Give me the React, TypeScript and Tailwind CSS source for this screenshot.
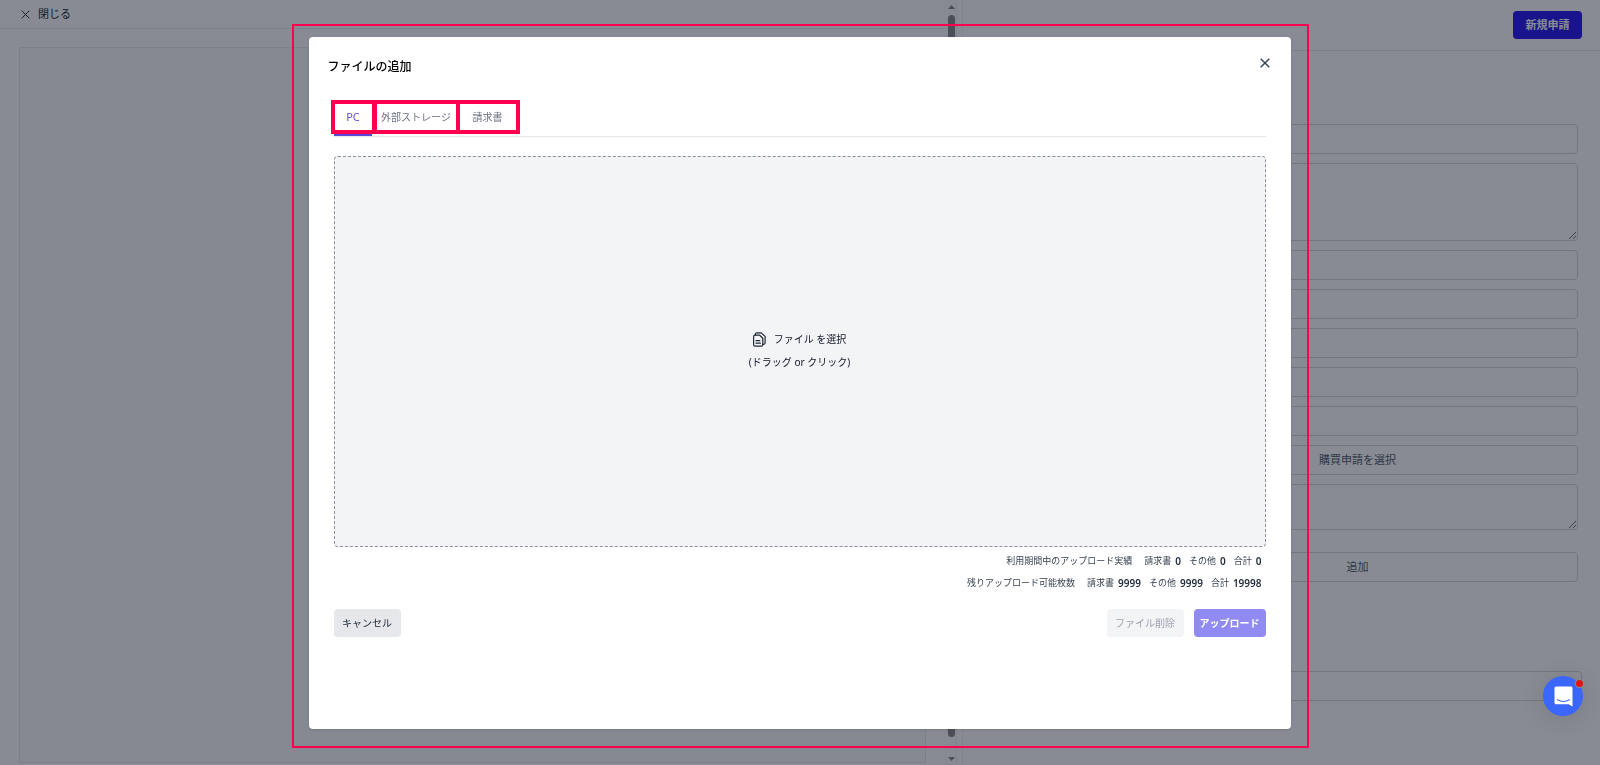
import React from "react";

const fieldClass =
  "block w-full rounded-sm border border-[#d1d5db] bg-white px-3 text-[11px] text-[#4b5563]";

function CloseIcon({ className }: { className: string }) {
  return (
    <svg className={className} viewBox="0 0 10 10" fill="none" stroke="currentColor" aria-hidden="true">
      <path d="M0.7 0.7l8.6 8.6M9.3 0.7L0.7 9.3" />
    </svg>
  );
}

function DocumentsIcon() {
  return (
    <svg className="h-[15px] w-[13px]" viewBox="0 0 13 15" fill="none" stroke="#1f2937" strokeWidth="1.2" strokeLinejoin="round" strokeLinecap="round" aria-hidden="true">
      <path d="M2.3 3.1V2.4C2.3 1.5 2.9 .9 3.8 .9h4.4l3.9 3.5v6.4c0 .9-.6 1.5-1.5 1.5h-.7" />
      <path d="M2.1 3.2h4.6l3.1 3v6.5c0 .9-.6 1.5-1.5 1.5H2.1c-.9 0-1.5-.6-1.5-1.5V4.7c0-.9.6-1.5 1.5-1.5z" />
      <path d="M3 8.7h3.800M3 11.2h4.4" />
    </svg>
  );
}

function Scrollbar() {
  return (
    <div className="flex w-3 shrink-0 flex-col items-center bg-[#fcfcfc] pb-1 pl-[2px] pt-[5px]">
      <svg className="h-1 w-[7px] shrink-0" viewBox="0 0 7 4" aria-hidden="true">
        <path d="M0 4L3.5 0L7 4z" fill="#858585" />
      </svg>
      <div className="mb-5 mt-[6px] w-[7px] grow rounded-full bg-[#858585]" />
      <svg className="h-1 w-[7px] shrink-0" viewBox="0 0 7 4" aria-hidden="true">
        <path d="M0 0L3.5 4L7 0z" fill="#858585" />
      </svg>
    </div>
  );
}

function PreviewPane() {
  return (
    <section className="flex w-[59.75%] min-w-0 shrink-0">
      <div className="flex min-w-0 grow flex-col">
        <header className="flex h-[29px] shrink-0 items-center border-b border-[#e5e7eb] pl-[21px]">
          <button type="button" className="flex items-center gap-2 text-[11px] leading-4 text-[#111827]">
            <CloseIcon className="size-[9px]" />
            閉じる
          </button>
        </header>
        <div className="mb-[2px] ml-[19px] mr-[18px] mt-[18px] grow border border-[#e5e7eb] bg-[#f9fafb]" />
      </div>
      <Scrollbar />
    </section>
  );
}

function RequestForm() {
  return (
    <section className="flex min-w-0 grow flex-col border-l border-[#f0f1f3]">
      <div className="ml-[5px] flex grow flex-col border-l border-[#f0f1f3]">
        <header className="flex h-[51px] shrink-0 items-center justify-end border-b border-[#e5e7eb] pr-[18px]">
          <button type="button" className="h-7 w-[69px] rounded bg-[#2010f0] text-[11px] font-bold text-white">
            新規申請
          </button>
        </header>
        <div className="ml-[174px] mr-[22px] mt-[73px] flex flex-col gap-[9px]">
          <input aria-label="件名" className={`h-[30px] ${fieldClass}`} />
          <textarea aria-label="内容" className={`h-[78px] ${fieldClass}`} />
          <input aria-label="取引先" className={`h-[30px] ${fieldClass}`} />
          <input aria-label="取引日" className={`h-[30px] ${fieldClass}`} />
          <input aria-label="金額" className={`h-[30px] ${fieldClass}`} />
          <input aria-label="支払日" className={`h-[30px] ${fieldClass}`} />
          <input aria-label="部署" className={`h-[30px] ${fieldClass}`} />
          <button type="button" className={`h-[30px] ${fieldClass}`}>購買申請を選択</button>
          <textarea aria-label="備考" className={`h-[46px] ${fieldClass}`} />
        </div>
        <div className="ml-[174px] mr-[22px] mt-[22px]">
          <button type="button" className={`h-[30px] ${fieldClass}`}>追加</button>
        </div>
        <div className="ml-[174px] mr-[18px] mt-[89px]">
          <input aria-label="コメント" className={`h-[30px] ${fieldClass}`} />
        </div>
      </div>
    </section>
  );
}

function Stat({ label, value }: { label: string; value: number }) {
  return (
    <span className="flex items-center gap-1">
      {label}
      <b className="text-[10px] font-semibold text-[#1f2937]">{value}</b>
    </span>
  );
}

function StatRow({ title, values }: { title: string; values: [number, number, number] }) {
  return (
    <div className="flex h-[22px] items-center justify-end gap-2">
      <span className="mr-1">{title}</span>
      <Stat label="請求書" value={values[0]} />
      <Stat label="その他" value={values[1]} />
      <Stat label="合計" value={values[2]} />
    </div>
  );
}

function UploadDialog() {
  return (
    <div role="dialog" aria-modal="true" aria-labelledby="dialog-title" className="flex grow flex-col rounded bg-white px-[25px] shadow">
      <div className="flex h-[51px] items-center justify-between">
        <h2 id="dialog-title" className="-ml-[6px] pt-[9px] text-[12px] font-medium leading-5 text-black">
          ファイルの追加
        </h2>
        <button type="button" aria-label="閉じる" className="-mr-1 text-[#334155]">
          <CloseIcon className="size-[10px] stroke-[1.4]" />
        </button>
      </div>

      <div role="tablist" className="-ml-[3px] mt-3 flex text-[10px] text-[#6b7280]">
        <button role="tab" aria-selected="true" type="button" className="relative h-[34px] w-[45px] border-4 border-[#ff0050] text-[11px] text-[#6050dc] after:absolute after:-bottom-[6px] after:-left-px after:h-[2px] after:w-[38px] after:bg-[#5b45d6]">
          PC
        </button>
        <button role="tab" aria-selected="false" type="button" className="-ml-[3px] h-[34px] w-[87px] border-4 border-[#ff0050]">
          外部ストレージ
        </button>
        <button role="tab" aria-selected="false" type="button" className="-ml-1 h-[34px] w-16 border-4 border-[#ff0050]">
          請求書
        </button>
      </div>
      <div className="mt-[2px] h-px bg-[#e5e7eb]" />

      <button type="button" className="mt-[19px] flex h-[391px] flex-col items-center justify-center rounded border border-dashed border-[#8b9099] bg-[#f3f4f6] pb-[2px] text-[10px] leading-[23px] text-[#111827]">
        <span className="flex items-center gap-2">
          <DocumentsIcon />
          ファイル を選択
        </span>
        <span>(ドラッグ or クリック)</span>
      </button>

      <div className="mt-[3px] pr-1 text-[9px] text-[#374151]">
        <StatRow title="利用期間中のアップロード実績" values={[0, 0, 0]} />
        <StatRow title="残りアップロード可能枚数" values={[9999, 9999, 19998]} />
      </div>

      <div className="mt-[15px] flex gap-[10px] text-[10px]">
        <button type="button" className="mr-auto h-7 w-[67px] rounded bg-[#e5e7eb] text-[#1f2937]">キャンセル</button>
        <button type="button" disabled className="h-7 w-[77px] rounded bg-[#f3f4f6] text-[#9ca3af]">ファイル削除</button>
        <button type="button" disabled className="h-7 w-[72px] rounded bg-[#918af3] font-bold text-white">アップロード</button>
      </div>
    </div>
  );
}

function ChatLauncher() {
  return (
    <div className="fixed bottom-[49px] right-[17px] size-10">
      <button type="button" aria-label="チャット" className="flex size-10 items-center justify-center rounded-full bg-[#3b66fb] shadow-[0_2px_24px_rgba(0,0,0,0.12)]">
        <svg className="h-[21px] w-[19px]" viewBox="0 0 19 21" fill="none" aria-hidden="true">
          <path d="M2 .5h15a1.500 1.500 0 0 1 1.500 1.500v18.500l-4-2.200H2a1.500 1.500 0 0 1-1.500-1.500V2a1.500 1.500 0 0 1 1.500-1.500z" fill="white" />
          <path d="M3.600 13.700c3.400 2.300 8.400 2.300 11.800 0" stroke="#3b66fb" strokeWidth="1.100" strokeLinecap="round" />
        </svg>
      </button>
      <span className="absolute right-0 top-1 size-[7px] rounded-full bg-[#e01414] ring-1 ring-[#888b93]" />
    </div>
  );
}

export default function App() {
  return (
    <main className="relative flex min-h-screen overflow-hidden bg-white font-['Noto_Sans','Noto_Sans_CJK_JP',sans-serif]">
      <PreviewPane />
      <RequestForm />
      <div className="fixed inset-0 flex flex-col items-center bg-[rgba(17,24,39,0.5)] pb-[17px] pt-6">
        <div className="flex w-full max-w-[1017px] grow flex-col border-2 border-[#ff0050] pb-[17px] pl-[15px] pr-4 pt-[11px]">
          <UploadDialog />
        </div>
      </div>
      <ChatLauncher />
    </main>
  );
}
